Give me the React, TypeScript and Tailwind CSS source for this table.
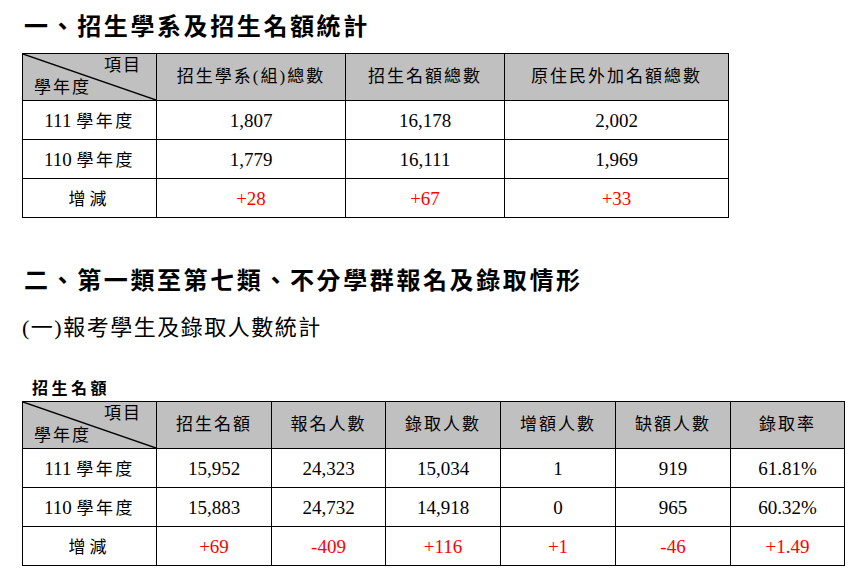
import React from "react"

const serif = "font-['Liberation_Serif','Noto_Sans_CJK_TC',serif]"
const sans = "font-['Noto_Sans_CJK_TC','Liberation_Sans',sans-serif]"

function CornerHead() {
  return (
    <th className="relative border border-black bg-[#c0c0c0] p-0 font-normal">
      {/* 斜線 */}
      <svg className="absolute inset-0 h-full w-full" preserveAspectRatio="none" viewBox="0 0 100 100">
        <line x1="0" y1="0" x2="100" y2="100" stroke="black" strokeWidth="1.4" vectorEffect="non-scaling-stroke" />
      </svg>
      <div className="flex h-full flex-col justify-between">
        <span className="self-end pr-[14px] pt-[1px] text-[17px] leading-[22px] tracking-[2px]">項目</span>
        <span className="self-start pb-[1px] pl-[11px] text-[17px] leading-[22px] tracking-[2px]">學年度</span>
      </div>
    </th>
  )
}

function HeadCell({ children }: { children: React.ReactNode }) {
  return (
    <th className="border border-black bg-[#c0c0c0] p-0 text-center text-[17px] font-normal tracking-[2px]">
      {children}
    </th>
  )
}

function Cell({ children, red }: { children: React.ReactNode; red?: boolean }) {
  return (
    <td className={`border border-black p-0 pt-[3px] text-center text-[19px] ${red ? "text-[#f00]" : "text-black"}`}>
      {children}
    </td>
  )
}

function RowLabel({ year }: { year?: string }) {
  return (
    <td className="border border-black p-0 pt-[3px] text-center text-[19px]">
      {year ? (
        <>
          {year} <span className="text-[17px] tracking-[2.5px]">學年度</span>
        </>
      ) : (
        <span className="text-[17px] tracking-[4px]">增減</span>
      )}
    </td>
  )
}

const t1 = {
  heads: ["招生學系(組)總數", "招生名額總數", "原住民外加名額總數"],
  rows: [
    ["111", "1,807", "16,178", "2,002"],
    ["110", "1,779", "16,111", "1,969"],
  ],
  diff: ["+28", "+67", "+33"],
}

const t2 = {
  heads: ["招生名額", "報名人數", "錄取人數", "增額人數", "缺額人數", "錄取率"],
  rows: [
    ["111", "15,952", "24,323", "15,034", "1", "919", "61.81%"],
    ["110", "15,883", "24,732", "14,918", "0", "965", "60.32%"],
  ],
  diff: ["+69", "-409", "+116", "+1", "-46", "+1.49"],
}

export default function App() {
  return (
    <div className={`min-h-[585px] w-[859px] bg-white pl-[22px] text-black ${serif}`}>
      {/* 一、 */}
      <h1 className={`pl-[2px] pt-[9px] text-[24px] font-bold leading-[32px] tracking-[2.6px] ${sans}`}>
        一、招生學系及招生名額統計
      </h1>

      <table className="mt-[12px] w-[707px] table-fixed border-collapse">
        <colgroup>
          <col className="w-[134px]" />
          <col className="w-[189px]" />
          <col className="w-[159px]" />
          <col />
        </colgroup>
        <thead>
          <tr className="h-[47px]">
            <CornerHead />
            {t1.heads.map((h) => (
              <HeadCell key={h}>{h}</HeadCell>
            ))}
          </tr>
        </thead>
        <tbody>
          {t1.rows.map((r) => (
            <tr key={r[0]} className="h-[39px]">
              <RowLabel year={r[0]} />
              {r.slice(1).map((v, i) => (
                <Cell key={i}>{v}</Cell>
              ))}
            </tr>
          ))}
          <tr className="h-[39px]">
            <RowLabel />
            {t1.diff.map((v, i) => (
              <Cell key={i} red>
                {v}
              </Cell>
            ))}
          </tr>
        </tbody>
      </table>

      {/* 二、 */}
      <h2 className={`mt-[45px] pl-[2px] text-[24px] font-bold leading-[32px] tracking-[2.6px] ${sans}`}>
        二、第一類至第七類、不分學群報名及錄取情形
      </h2>

      <p className="mt-[19px] text-[22px] leading-[28px] tracking-[1.5px]">(一)報考學生及錄取人數統計</p>

      <p className={`mt-[34px] pl-[10px] text-[16px] font-bold leading-[22px] tracking-[3.5px] ${sans}`}>招生名額</p>

      <table className="mt-[3px] w-[823px] table-fixed border-collapse">
        <colgroup>
          <col className="w-[134px]" />
          <col className="w-[115px]" />
          <col className="w-[114px]" />
          <col className="w-[115px]" />
          <col className="w-[115px]" />
          <col className="w-[115px]" />
          <col />
        </colgroup>
        <thead>
          <tr className="h-[47px]">
            <CornerHead />
            {t2.heads.map((h) => (
              <HeadCell key={h}>{h}</HeadCell>
            ))}
          </tr>
        </thead>
        <tbody>
          {t2.rows.map((r) => (
            <tr key={r[0]} className="h-[39px]">
              <RowLabel year={r[0]} />
              {r.slice(1).map((v, i) => (
                <Cell key={i}>{v}</Cell>
              ))}
            </tr>
          ))}
          <tr className="h-[39px]">
            <RowLabel />
            {t2.diff.map((v, i) => (
              <Cell key={i} red>
                {v}
              </Cell>
            ))}
          </tr>
        </tbody>
      </table>
    </div>
  )
}
